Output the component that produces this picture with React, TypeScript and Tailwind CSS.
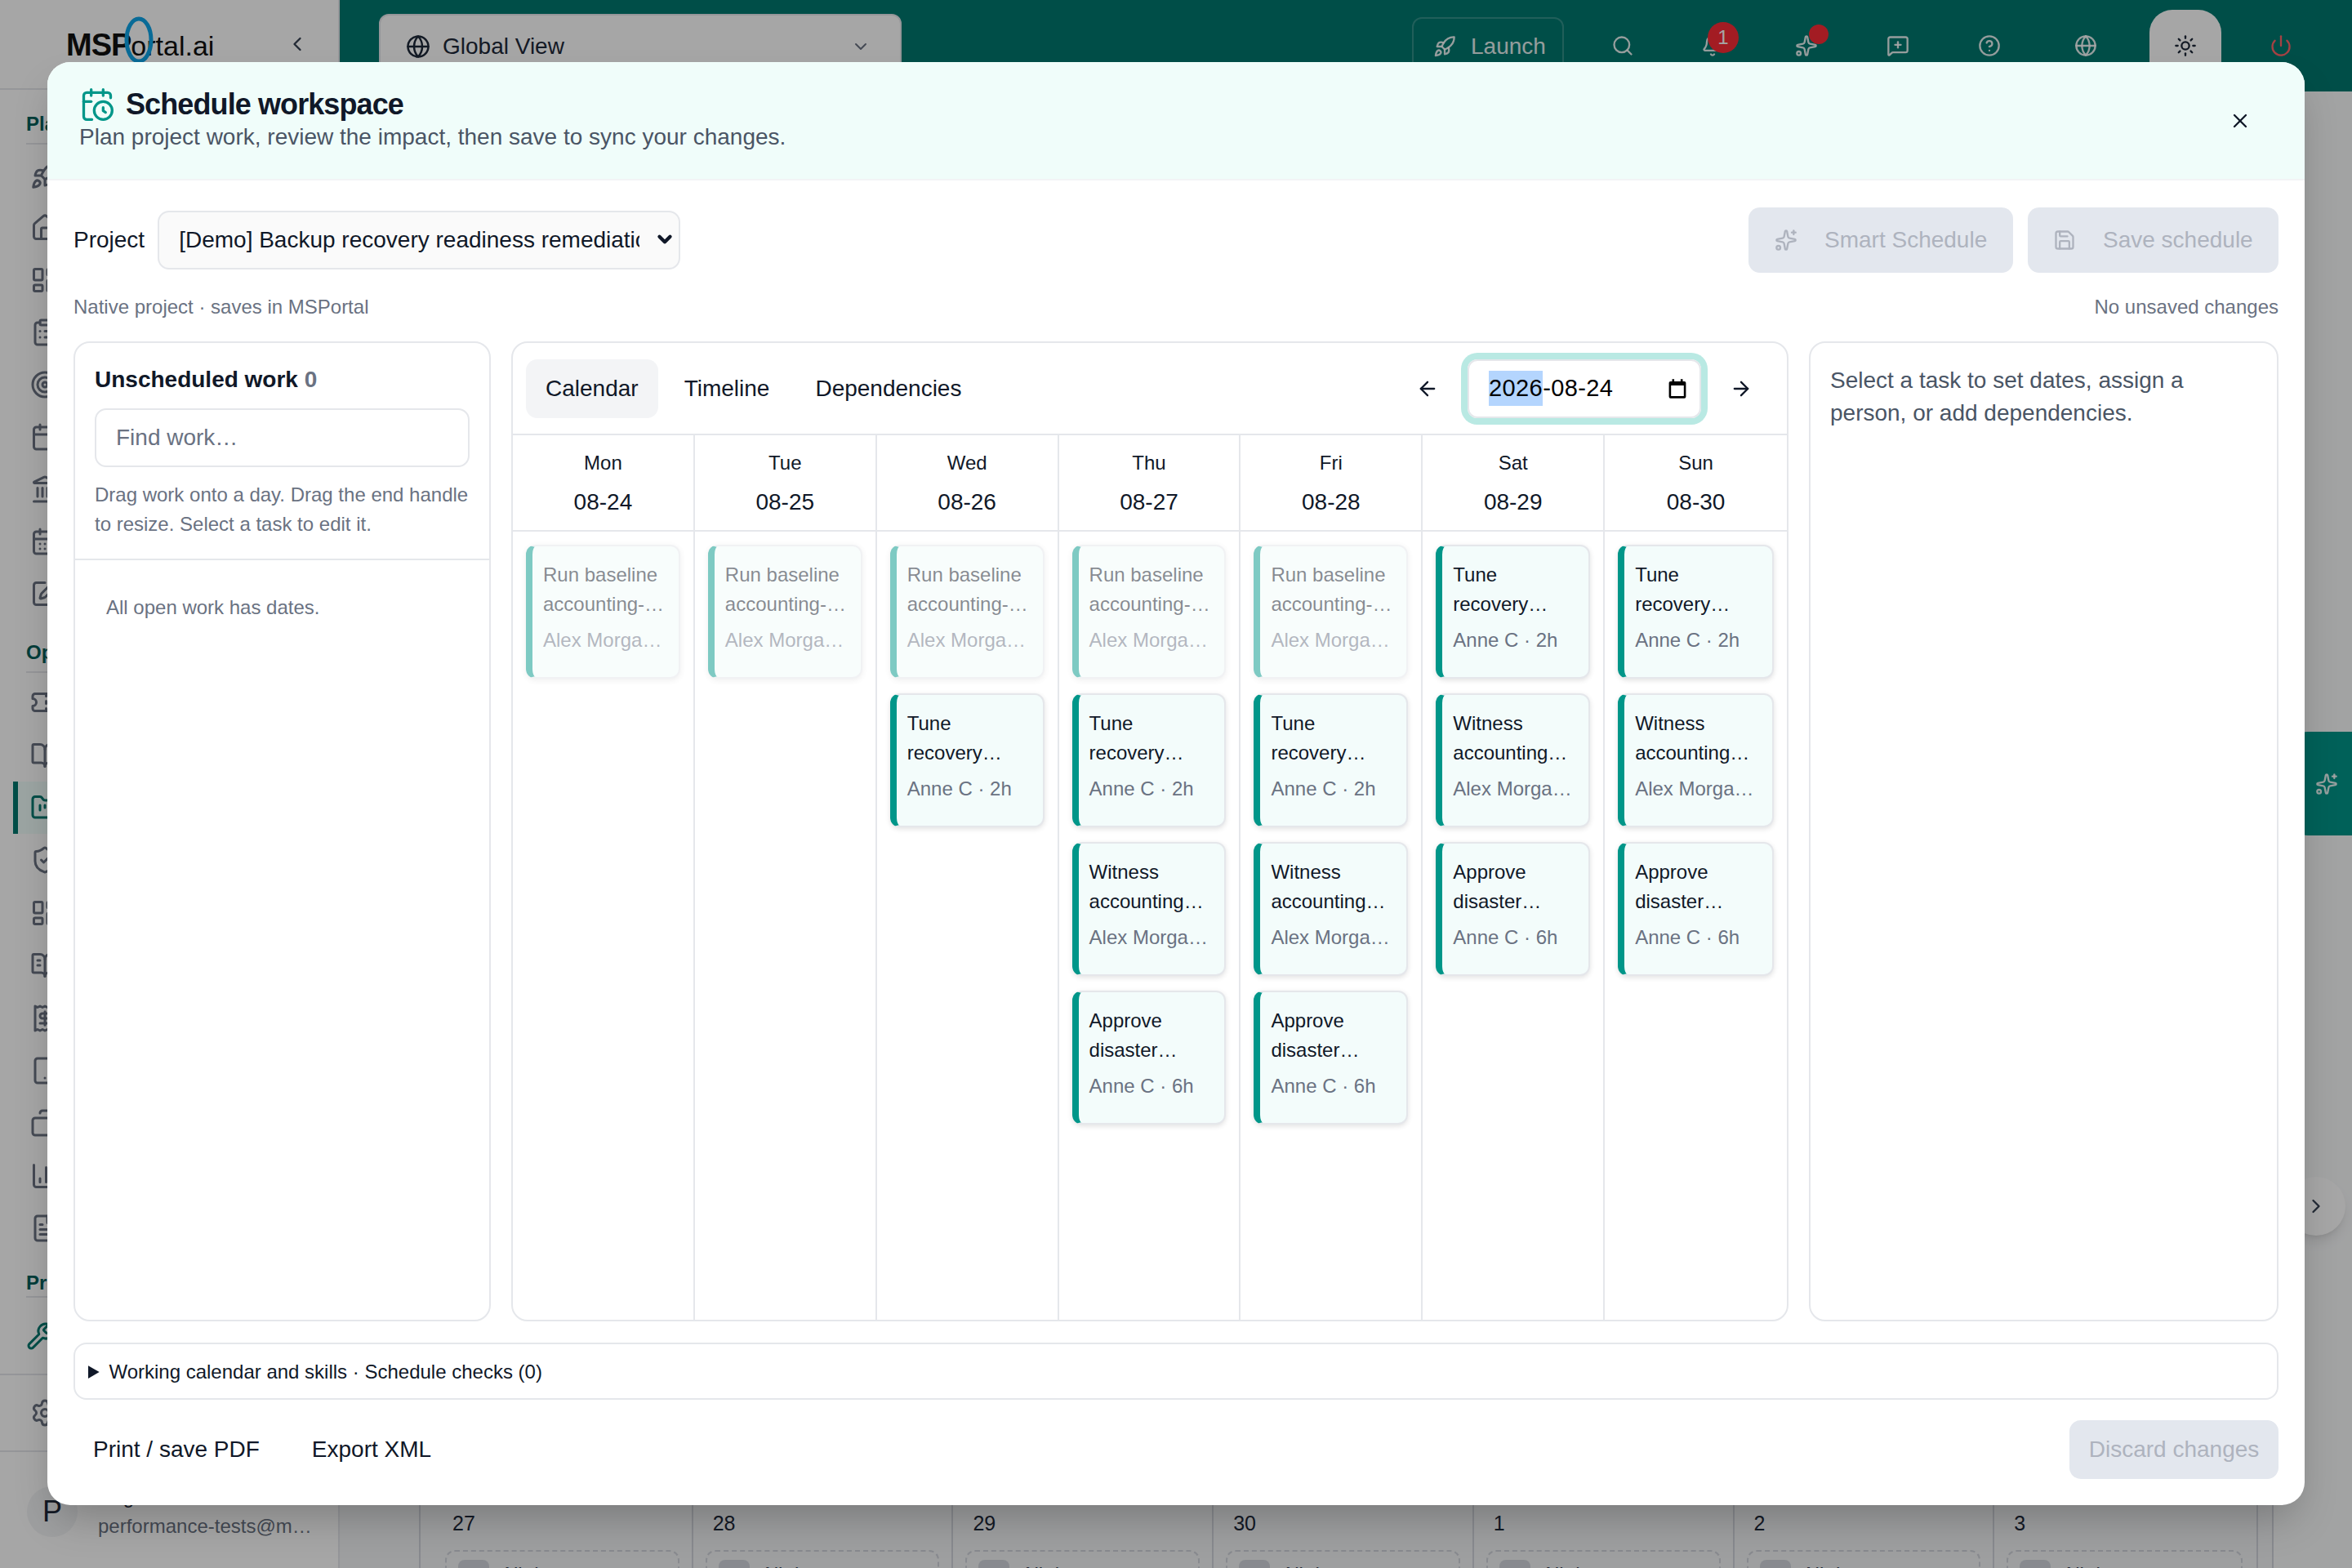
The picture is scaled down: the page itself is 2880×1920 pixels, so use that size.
/**
 * Schedule workspace dialog, open on top of the dimmed project calendar page.
 */

import {
  ArrowLeft,
  ArrowRight,
  Bell,
  BookOpen,
  BookOpenText,
  CalendarClock,
  Calendar,
  CalendarDays,
  ChartColumn,
  ChevronDown,
  ChevronLeft,
  ChevronRight,
  CircleHelp,
  ClipboardList,
  Copy,
  FileText,
  FolderKanban,
  Globe,
  Landmark,
  LayoutDashboard,
  MessageSquarePlus,
  Power,
  Receipt,
  Rocket,
  Save,
  Search,
  Settings,
  ShieldCheck,
  Sparkles,
  SquarePen,
  Sun,
  Tablet,
  Target,
  Ticket,
  Home,
  Wrench,
  X,
} from 'lucide-react';

type Task = { title: [string, string]; meta: string; faded?: boolean };

const baseline: Task = { title: ['Run baseline', 'accounting-…'], meta: 'Alex Morga…', faded: true };
const tune: Task = { title: ['Tune', 'recovery…'], meta: 'Anne C · 2h' };
const witness: Task = { title: ['Witness', 'accounting…'], meta: 'Alex Morga…' };
const approve: Task = { title: ['Approve', 'disaster…'], meta: 'Anne C · 6h' };

const days: { name: string; date: string; tasks: Task[] }[] = [
  { name: 'Mon', date: '08-24', tasks: [baseline] },
  { name: 'Tue', date: '08-25', tasks: [baseline] },
  { name: 'Wed', date: '08-26', tasks: [baseline, tune] },
  { name: 'Thu', date: '08-27', tasks: [baseline, tune, witness, approve] },
  { name: 'Fri', date: '08-28', tasks: [baseline, tune, witness, approve] },
  { name: 'Sat', date: '08-29', tasks: [tune, witness, approve] },
  { name: 'Sun', date: '08-30', tasks: [tune, witness, approve] },
];

const planIcons = [Rocket, Home, LayoutDashboard, ClipboardList, Target, Calendar, Landmark, CalendarDays, SquarePen];
const operateIcons = [Ticket, BookOpen, FolderKanban, ShieldCheck, LayoutDashboard, BookOpenText, Receipt, Tablet, Copy, ChartColumn, FileText];

function SidebarHeading({ label, className = '' }: { label: string; className?: string }) {
  return (
    <div className={`mx-[32px] flex h-[48px] items-center border-b-2 border-gray-200 text-[24px] font-bold text-teal-800 ${className}`}>
      {label}
    </div>
  );
}

function Sidebar() {
  return (
    <aside className="flex w-[416px] shrink-0 flex-col overflow-hidden border-r-2 border-gray-200 bg-white">
      <div className="flex h-[110px] shrink-0 items-center border-b-2 border-gray-200 pl-[81px] pr-[36px]">
        <div className="relative mt-[2px] flex items-baseline text-[#111]">
          <span className="text-[38px] font-bold tracking-[-1px]">MSP</span>
          <span className="text-[34px]">ortal.ai</span>
          <svg className="absolute left-[71px] top-[-8px]" width="36" height="60" viewBox="0 0 36 60">
            <ellipse cx="18" cy="30" rx="15" ry="26" fill="none" stroke="#0ea5e9" strokeWidth="5" />
          </svg>
        </div>
        <ChevronLeft className="ml-auto text-gray-700" size={28} />
      </div>
      <div className="mt-[19px]">
        <SidebarHeading label="Plan" />
      </div>
      <div className="mt-[6px] flex flex-col">
        {planIcons.map((Icon, i) => (
          <div key={i} className="flex h-[64px] items-center pl-[37px] text-gray-500">
            <Icon size={36} />
          </div>
        ))}
      </div>
      <div className="mt-[17px]">
        <SidebarHeading label="Operate" />
      </div>
      <div className="mt-[4px] flex flex-col">
        {operateIcons.map((Icon, i) => (
          <div
            key={i}
            className={
              i === 2
                ? 'ml-[16px] flex h-[64.4px] items-center border-l-[6px] border-teal-700 bg-teal-50 pl-[15px] text-teal-700'
                : 'flex h-[64.4px] items-center pl-[37px] text-gray-500'
            }
          >
            <Icon size={36} className={i === 8 ? '-scale-x-100' : ''} />
          </div>
        ))}
      </div>
      <div className="mt-[5px]">
        <SidebarHeading label="Products" className="pt-[14px]" />
      </div>
      <div className="flex h-[95px] shrink-0 items-center border-b-2 border-gray-200 pl-[32px] text-teal-700">
        <Wrench size={36} />
      </div>
      <div className="flex h-[94px] shrink-0 items-center border-b-2 border-gray-200 pl-[37px] text-gray-500">
        <Settings size={36} />
      </div>
      <div className="mt-[37px] flex items-center pl-[33px]">
        <div className="flex h-[62px] w-[62px] shrink-0 items-center justify-center rounded-full bg-gray-100 text-[36px] text-gray-800">
          P
        </div>
        <div className="ml-[25px] min-w-0 text-[24px] leading-[36px]">
          <div className="text-gray-800">Regression Tests</div>
          <div className="text-gray-500">performance-tests@m…</div>
        </div>
      </div>
    </aside>
  );
}

function TopBar() {
  return (
    <header className="flex h-[112px] shrink-0 items-start bg-teal-700 pl-[48px]">
      <div className="mt-[17px] flex h-[80px] w-[640px] items-center rounded-[12px] border-2 border-gray-200 bg-white pl-[31px] pr-[36px] text-[28px] text-gray-800">
        <Globe size={30} />
        <span className="ml-[15px]">Global View</span>
        <ChevronDown size={24} className="ml-auto text-gray-500" />
      </div>
      <div className="ml-[625px] mt-[21px] flex h-[72px] w-[186px] items-center rounded-[12px] border-2 border-white/20 pl-[24px] text-[28px] text-white/90">
        <Rocket size={28} />
        <span className="ml-[18px]">Launch</span>
      </div>
      <div className="mt-[12px] flex h-[88px] items-center text-white/90">
        <div className="flex w-[144px] justify-center">
          <Search size={28} />
        </div>
        <div className="relative flex w-[88px] justify-center">
          <Bell size={28} className="mr-[12px]" />
          <span className="absolute left-[32px] top-[-15px] flex h-[38px] w-[38px] items-center justify-center rounded-full bg-red-500 text-[24px] text-white">
            1
          </span>
        </div>
        <div className="relative flex w-[130px] justify-center">
          <Sparkles size={28} />
          <span className="absolute left-[68px] top-[-12px] h-[24px] w-[24px] rounded-full bg-red-500" />
        </div>
        <div className="flex w-[94px] justify-center">
          <MessageSquarePlus size={28} />
        </div>
        <div className="flex w-[130px] justify-center">
          <CircleHelp size={28} />
        </div>
        <div className="flex w-[106px] justify-center">
          <Globe size={28} />
        </div>
        <div className="ml-[25px] flex h-[110px] w-[88px] items-center justify-center self-start rounded-[28px] bg-white pb-[22px] text-gray-800">
          <Sun size={28} />
        </div>
        <div className="ml-[59px] text-red-400">
          <Power size={28} />
        </div>
      </div>
    </header>
  );
}

function BackgroundCalendar() {
  return (
    <div className="flex min-w-0 flex-1">
      <main className="flex flex-1 flex-col justify-end border-r-2 border-gray-300 bg-gray-100 pl-[97px] pr-[17px]">
        <div className="grid h-[90px] grid-cols-7 overflow-hidden border-x-2 border-gray-300 pl-[15px] pr-[2px]">
          {['27', '28', '29', '30', '1', '2', '3'].map((n, i) => (
            <div key={n} className={i < 6 ? 'border-r-2 border-gray-300 pl-[15px] pr-[15px] pt-[17px]' : 'pl-[15px] pr-[15px] pt-[17px]'}>
              <div className="pl-[9px] text-[25px] leading-[36px] text-gray-800">{n}</div>
              <div className="mt-[15px] flex h-[70px] gap-[14px] rounded-[12px] border-2 border-dashed border-gray-300 pl-[14px] pt-[10px]">
                <span className="h-[40px] w-[38px] rounded-[8px] bg-gray-300" />
                <span className="text-[24px] text-gray-700">All day</span>
              </div>
            </div>
          ))}
        </div>
      </main>
      <div className="w-[96px] shrink-0 bg-gray-50" />
    </div>
  );
}

function TaskCard({ task }: { task: Task }) {
  return (
    <div
      className={`h-[164px] rounded-[12px] border-2 border-l-[8px] border-gray-200 border-l-teal-600 bg-[#f3fcfb] pl-[13px] pt-[17px] shadow-[0_2px_6px_rgba(0,0,0,0.12)] ${
        task.faded ? 'opacity-50' : ''
      }`}
    >
      <div className="text-[24px] leading-[36px] text-gray-900">{task.title[0]}</div>
      <div className="text-[24px] leading-[36px] text-gray-900">{task.title[1]}</div>
      <div className="mt-[8px] text-[24px] leading-[36px] text-gray-500">{task.meta}</div>
    </div>
  );
}

function CalendarPanel() {
  return (
    <section className="flex min-w-0 flex-1 flex-col overflow-hidden rounded-[20px] border-2 border-gray-200">
      <div className="flex h-[113px] shrink-0 items-center border-b-2 border-gray-200 pl-[16px] pr-[28px] text-[28px] text-gray-900">
        <div className="flex gap-[8px]">
          <button className="h-[72px] rounded-[14px] bg-gray-100 px-[24px]">Calendar</button>
          <button className="h-[72px] rounded-[14px] px-[24px]">Timeline</button>
          <button className="h-[72px] rounded-[14px] px-[24px]">Dependencies</button>
        </div>
        <div className="ml-auto flex items-center gap-[21px]">
          <button className="flex h-[56px] w-[56px] items-center justify-center">
            <ArrowLeft size={28} />
          </button>
          <div className="flex h-[72px] w-[286px] items-center rounded-[12px] border-2 border-gray-200 pl-[24px] pr-[14px] text-[29px] tracking-[0.4px] text-black ring-[8px] ring-[#b9e9e3]">
            <span className="bg-[#b4d5fe]">2026</span>
            <span>-08-24</span>
            <svg className="ml-auto" width="26" height="26" viewBox="0 0 20 20" fill="currentColor">
              <path
                fillRule="evenodd"
                d="M5 1h2v2h6V1h2v2h1.500A1.500 1.500 0 0 1 18 4.500v13a1.500 1.500 0 0 1-1.500 1.500h-13A1.500 1.500 0 0 1 2 17.500v-13A1.500 1.500 0 0 1 3.500 3H5zM4 7v10h12V7z"
              />
            </svg>
          </div>
          <button className="flex h-[56px] w-[56px] items-center justify-center">
            <ArrowRight size={28} />
          </button>
        </div>
      </div>
      <div className="grid min-h-0 flex-1 grid-cols-7">
        {days.map((day, i) => (
          <div key={day.name} className={i < 6 ? 'flex min-w-0 flex-col border-r-2 border-gray-200' : 'flex min-w-0 flex-col'}>
            <div className="flex h-[118px] shrink-0 flex-col items-center border-b-2 border-gray-200 pt-[16px] text-gray-900">
              <div className="text-[24px] leading-[36px]">{day.name}</div>
              <div className="mt-[12px] text-[28px] leading-[36px]">{day.date}</div>
            </div>
            <div className="flex flex-col gap-[18px] pl-[16px] pr-[16px] pt-[16px]">
              {day.tasks.map((task, n) => (
                <TaskCard key={n} task={task} />
              ))}
            </div>
          </div>
        ))}
      </div>
    </section>
  );
}

function ScheduleModal() {
  return (
    <div className="absolute left-[58px] top-[76px] flex h-[1767px] w-[2764px] flex-col overflow-hidden rounded-[28px] bg-white text-gray-900 shadow-2xl">
      <div className="relative h-[145px] shrink-0 border-b-2 border-gray-100 bg-[#f0fdfa] pl-[39px] pt-[30px]">
        <div className="flex h-[44px] items-center gap-[13px]">
          <CalendarClock size={44} strokeWidth={1.8} className="text-teal-600" />
          <h2 className="text-[36px] font-bold tracking-[-0.025em]">Schedule workspace</h2>
        </div>
        <p className="-mt-[2px] text-[28px] leading-[40px] text-gray-600">Plan project work, review the impact, then save to sync your changes.</p>
        <button className="absolute right-[65px] top-[58px]">
          <X size={28} />
        </button>
      </div>

      <div className="flex min-h-0 flex-1 flex-col px-[32px] pb-[32px] pt-[33px]">
        <div className="flex h-[80px] shrink-0 items-center text-[28px]">
          <label className="mr-[16px]">Project</label>
          <div className="relative">
            <select className="h-[72px] w-[640px] appearance-none rounded-[14px] border-2 border-gray-200 bg-[#fafafa] pl-[24px] pr-[48px]">
              <option>[Demo] Backup recovery readiness remediation</option>
            </select>
            <ChevronDown size={26} strokeWidth={4} className="pointer-events-none absolute right-[6px] top-[22px]" />
          </div>
          <div className="ml-auto flex gap-[18px] text-[#aeb3be]">
            <button className="flex h-[80px] w-[324px] items-center gap-[33px] rounded-[14px] bg-[#e3e7ee] pl-[32px]">
              <Sparkles size={28} />
              Smart Schedule
            </button>
            <button className="flex h-[80px] w-[307px] items-center gap-[33px] rounded-[14px] bg-[#e3e7ee] pl-[31px]">
              <Save size={28} />
              Save schedule
            </button>
          </div>
        </div>

        <div className="mt-[24px] flex h-[36px] shrink-0 items-center justify-between text-[24px] text-gray-500">
          <span>Native project · saves in MSPortal</span>
          <span>No unsaved changes</span>
        </div>

        <div className="mt-[24px] flex min-h-0 flex-1 gap-[25px]">
          <section className="flex w-[511px] shrink-0 flex-col rounded-[20px] border-2 border-gray-200">
            <div className="border-b-2 border-gray-200 px-[24px] pb-[24px] pt-[27px]">
              <div className="text-[28px] font-bold leading-[36px]">
                Unscheduled work <span className="text-gray-500">0</span>
              </div>
              <input
                className="mt-[17px] h-[72px] w-full rounded-[14px] border-2 border-gray-200 px-[24px] text-[28px] outline-none placeholder:text-gray-500"
                placeholder="Find work…"
              />
              <p className="mt-[16px] text-[24px] leading-[36px] text-gray-500">
                Drag work onto a day. Drag the end handle to resize. Select a task to edit it.
              </p>
            </div>
            <p className="pl-[38px] pt-[40px] text-[24px] leading-[36px] text-gray-500">All open work has dates.</p>
          </section>

          <CalendarPanel />

          <section className="w-[575px] shrink-0 rounded-[20px] border-2 border-gray-200 px-[24px] pt-[26px] text-[28px] leading-[40px] text-gray-600">
            Select a task to set dates, assign a person, or add dependencies.
          </section>
        </div>

        <details className="mt-[26px] h-[70px] shrink-0 rounded-[16px] border-2 border-gray-200 pl-[16px] pt-[16px]">
          <summary className="text-[24px] leading-[36px]">Working calendar and skills · Schedule checks (0)</summary>
        </details>

        <div className="mt-[25px] flex h-[72px] shrink-0 items-center text-[28px]">
          <button className="px-[24px]">Print / save PDF</button>
          <button className="ml-[16px] px-[24px]">Export XML</button>
          <button className="ml-auto h-[72px] w-[256px] rounded-[14px] bg-[#e3e7ee] text-[#aeb3be]">Discard changes</button>
        </div>
      </div>
    </div>
  );
}

export default function App() {
  return (
    <div className="relative flex h-[1920px] w-[2880px] overflow-hidden font-['Liberation_Sans',Arial,sans-serif]">
      <Sidebar />
      <div className="flex min-w-0 flex-1 flex-col">
        <TopBar />
        <BackgroundCalendar />
      </div>

      {/* Floating assistant tab and rail toggle on the page */}
      <button className="absolute right-0 top-[896px] flex h-[127px] w-[70px] items-center rounded-l-[16px] bg-teal-600 pl-[25px] text-white/90">
        <Sparkles size={28} />
      </button>
      <button className="absolute left-[2800px] top-[1441px] flex h-[72px] w-[72px] items-center justify-center rounded-full bg-white text-gray-700 shadow-lg">
        <ChevronRight size={28} />
      </button>

      <div className="absolute inset-0 bg-black/35" />
      <ScheduleModal />
    </div>
  );
}
